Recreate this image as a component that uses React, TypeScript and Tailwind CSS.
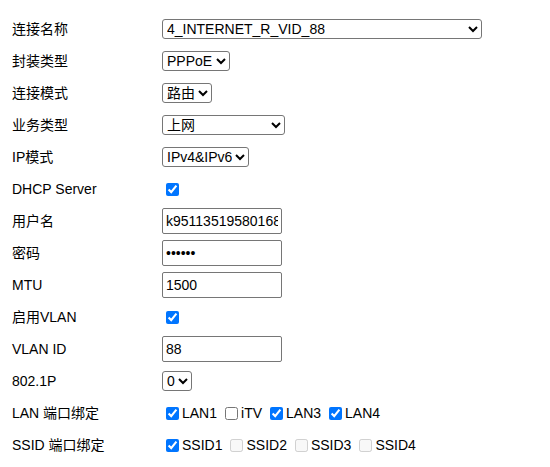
import React from "react";

const sel = "h-[20px] border border-[#767676] rounded-[3px] bg-white text-[14px] text-black";
const inp = "h-[26px] w-[120px] border border-[#767676] rounded-[2px] bg-white px-[3px] text-[14px] text-black outline-none";
const chk = "ml-[4px] mr-[3px] w-[13px] h-[13px]";

function Row({ label, children }: { label: string; children: React.ReactNode }) {
  return (
    <div className="flex h-[32px] items-center">
      <div className="w-[150px] shrink-0">{label}</div>
      <div className="flex items-center">{children}</div>
    </div>
  );
}

function Box({ text, checked, disabled }: { text: string; checked?: boolean; disabled?: boolean }) {
  return (
    <label className="flex items-center">
      <input type="checkbox" className={chk} defaultChecked={checked} disabled={disabled} />
      <span>{text}</span>
    </label>
  );
}

export default function App() {
  return (
    <div
      className="min-h-screen bg-white pl-[12px] pt-[13px] text-[14px] leading-none text-black"
      style={{ fontFamily: '"Liberation Sans", "Noto Sans CJK SC", sans-serif' }}
    >
      <Row label="连接名称">
        <select className={`${sel} w-[320px]`} defaultValue="a">
          <option value="a">4_INTERNET_R_VID_88</option>
        </select>
      </Row>
      <Row label="封装类型">
        <select className={`${sel} w-[68px]`}>
          <option>PPPoE</option>
        </select>
      </Row>
      <Row label="连接模式">
        <select className={`${sel} w-[50px]`}>
          <option>路由</option>
        </select>
      </Row>
      <Row label="业务类型">
        <select className={`${sel} w-[123px]`}>
          <option>上网</option>
        </select>
      </Row>
      <Row label="IP模式">
        <select className={`${sel} w-[87px]`}>
          <option>IPv4&amp;IPv6</option>
        </select>
      </Row>
      <Row label="DHCP Server">
        <input type="checkbox" className={chk} defaultChecked />
      </Row>
      <Row label="用户名">
        <input type="text" className={inp} defaultValue="k95113519580168" />
      </Row>
      <Row label="密码">
        <input type="password" className={inp} defaultValue="123456" />
      </Row>
      <Row label="MTU">
        <input type="text" className={inp} defaultValue="1500" />
      </Row>
      <Row label="启用VLAN">
        <input type="checkbox" className={chk} defaultChecked />
      </Row>
      <Row label="VLAN ID">
        <input type="text" className={inp} defaultValue="88" />
      </Row>
      <Row label="802.1P">
        <select className={`${sel} w-[30px]`}>
          <option>0</option>
        </select>
      </Row>
      <Row label="LAN 端口绑定">
        <div className="flex items-center gap-[4px]">
          <Box text="LAN1" checked />
          <Box text="iTV" />
          <Box text="LAN3" checked />
          <Box text="LAN4" checked />
        </div>
      </Row>
      <Row label="SSID 端口绑定">
        <div className="flex items-center gap-[4px]">
          <Box text="SSID1" checked />
          <Box text="SSID2" disabled />
          <Box text="SSID3" disabled />
          <Box text="SSID4" disabled />
        </div>
      </Row>
    </div>
  );
}
